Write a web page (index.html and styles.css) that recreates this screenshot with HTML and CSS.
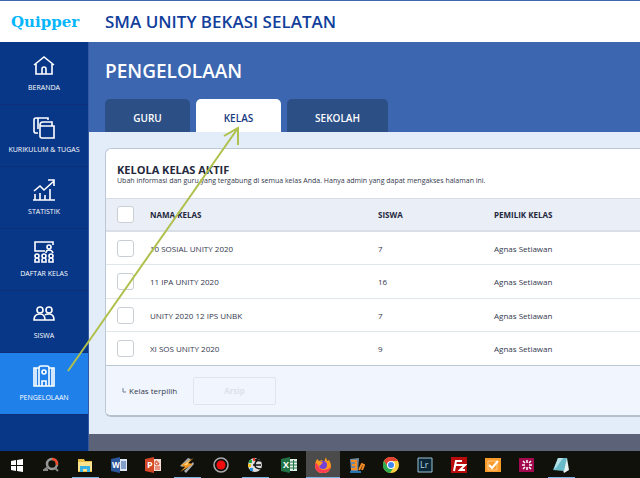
FILE: index.html
```html
<!DOCTYPE html>
<html lang="id">

<head>
    <meta charset="utf-8">
    <title>Quipper - Pengelolaan</title>
    <link rel="stylesheet" href="styles.css">
</head>

<body>
    <header class="topbar">
        <a href="#" class="logo">Quipper</a>
        <div class="school">SMA UNITY BEKASI SELATAN</div>
    </header>

    <div class="page">
        <nav class="sidebar">
            <a href="#" class="menu">
                <svg viewBox="0 0 22 22"><path d="M1 10 11 2l10 8M3 9v10h16V9M9 19v-5q0-2 2-2t2 2v5" /></svg>
                BERANDA
            </a>
            <a href="#" class="menu">
                <svg viewBox="0 0 22 22"><path d="M3 16q-2 0-2-2V3q0-2 2-2h12v2M5 1v11M1 16h4M7 8q0-3 3-3h9v4M7 8v11q0 2 2 2h12V9H9Q7 9 7 7" /></svg>
                KURIKULUM &amp; TUGAS
            </a>
            <a href="#" class="menu">
                <svg viewBox="0 0 22 22"><path d="M0 21h22M2 21v-6M7 21v-7M12 21v-5M17 21V10M1 12l6-5 4 4 10-9M15 1h6v6" /></svg>
                STATISTIK
            </a>
            <a href="#" class="menu">
                <svg viewBox="0 0 22 22"><path d="M12 10H2V1h18v3M13 12q0-3 3-3t4 3" /><circle cx="16" cy="6" r="2" /><path d="M4 13a2 2 0 1 1 0 4 2 2 0 1 1 0-4M11 13a2 2 0 1 1 0 4 2 2 0 1 1 0-4M18 13a2 2 0 1 1 0 4 2 2 0 1 1 0-4M2 21v-2q0-2 2-2t2 2v2zM9 21v-2q0-2 2-2t2 2v2zM16 21v-2q0-2 2-2t2 2v2z" /></svg>
                DAFTAR KELAS
            </a>
            <a href="#" class="menu">
                <svg viewBox="0 0 22 22"><circle cx="7" cy="7" r="3" /><circle cx="16" cy="7" r="3" /><path d="M1 17q0-6 6-6 5 0 5 6zM12 12q1-1 4-1 5 0 5 6h-9" /></svg>
                SISWA
            </a>
            <a href="#" class="menu active">
                <svg viewBox="0 0 22 22"><path d="M6 21V3q0-2 2-2h6q2 0 2 2v18M6 3H1v18h20V3h-5M3 3v18M19 3v18M9 21v-5h4v5" /><circle cx="11" cy="7" r="2" /></svg>
                PENGELOLAAN
            </a>
        </nav>

        <main class="content">
            <div class="banner">
                <h1>PENGELOLAAN</h1>
                <div class="tabs">
                    <button>GURU</button>
                    <button class="active">KELAS</button>
                    <button class="wide">SEKOLAH</button>
                </div>
            </div>

            <section class="panel">
                <div class="panel-head">
                    <h2>KELOLA KELAS AKTIF</h2>
                    <p>Ubah informasi dan guru yang tergabung di semua kelas Anda. Hanya admin yang dapat mengakses halaman ini.</p>
                </div>
                <table>
                    <thead>
                        <tr>
                            <th class="check"><input type="checkbox" aria-label="Pilih semua"></th>
                            <th class="name">NAMA KELAS</th>
                            <th class="count">SISWA</th>
                            <th>PEMILIK KELAS</th>
                        </tr>
                    </thead>
                    <tbody>
                        <tr>
                            <td class="check"><input type="checkbox" id="kelas1"></td>
                            <td><label for="kelas1">10 SOSIAL UNITY 2020</label></td>
                            <td>7</td>
                            <td>Agnas Setiawan</td>
                        </tr>
                        <tr>
                            <td class="check"><input type="checkbox" id="kelas2"></td>
                            <td><label for="kelas2">11 IPA UNITY 2020</label></td>
                            <td>16</td>
                            <td>Agnas Setiawan</td>
                        </tr>
                        <tr>
                            <td class="check"><input type="checkbox" id="kelas3"></td>
                            <td><label for="kelas3">UNITY 2020 12 IPS UNBK</label></td>
                            <td>7</td>
                            <td>Agnas Setiawan</td>
                        </tr>
                        <tr>
                            <td class="check"><input type="checkbox" id="kelas4"></td>
                            <td><label for="kelas4">XI SOS UNITY 2020</label></td>
                            <td>9</td>
                            <td>Agnas Setiawan</td>
                        </tr>
                    </tbody>
                </table>
                <div class="panel-foot">
                    <svg class="corner" viewBox="0 0 4 6"><path d="M1 0v4h3" /></svg>
                    <span>Kelas terpilih</span>
                    <button disabled>Arsip</button>
                </div>
            </section>

            <footer class="bottom"></footer>
        </main>
    </div>

    <!-- taskbar -->
    <div class="taskbar">
        <div class="app"><svg viewBox="0 0 16 16"><path fill="#fff" d="M2 4l5-1v5H2zM8 3l6-1v6H8zM2 9h5v5l-5-1zM8 9h6v6l-6-1z" /></svg></div>
        <div class="app"><svg viewBox="0 0 16 16"><g fill="none" stroke-width="2.5"><circle cx="9" cy="7" r="5" stroke="#999" /><path d="M9 2a5 5 0 0 1 5 6" stroke="#f04a28" /><path d="M5 10l-4 3h4M12 11l3 3" stroke="#888" stroke-width="2" /></g></svg></div>
        <div class="app open"><svg viewBox="0 0 16 16"><path fill="#e9bd4a" d="M1 2h6l1 2h7v11H1z" /><path fill="#fbe38e" d="M1 5h14v9H1z" /><path fill="#35b1e8" d="M3 9h10v6h-3v-3H6v3H3z" /></svg></div>
        <div class="app"><svg viewBox="0 0 16 16"><path fill="#dce6f5" d="M8 2h8v12H8z" /><path stroke="#2b579a" d="M10 5h5M10 7h5M10 9h5M10 11h5" /><path fill="#2b579a" d="M0 2l9-2v16l-9-2z" /><text x="1" y="11" font-size="8">W</text></svg></div>
        <div class="app"><svg viewBox="0 0 16 16"><path fill="#f7ddd6" d="M8 2h8v12H8z" /><path fill="none" stroke="#d24726" d="M10 10h5M10 12h5M12 4a2 2 0 1 0 2 2h-2z" /><path fill="#d24726" d="M0 2l9-2v16l-9-2z" /><text x="2" y="11" font-size="9">P</text></svg></div>
        <div class="app open"><svg viewBox="0 0 16 16"><path fill="#aaa" d="M1 9l8-8 3 1-8 8zM5 14l9-9 1 2-8 9z" /><path fill="#f59a22" d="M15 1L2 8l4 2-5 5 13-8-5-1z" /><path fill="#ffd783" d="M11 3L5 8l3 0z" /></svg></div>
        <div class="app"><svg viewBox="0 0 16 16"><circle cx="8" cy="8" r="7" fill="#111" stroke="#aaa" stroke-width="1.5" /><circle cx="8" cy="8" r="4.5" fill="#f00d0d" /></svg></div>
        <div class="app open"><svg viewBox="0 0 16 16"><circle cx="8" cy="8" r="7" fill="#ddd" /><path fill="none" stroke="#111" stroke-width="1.5" d="M14 4q-5-2-6 3t7 5M6 8h8M8 3l5-2" /><path fill="#26a643" d="M2 3h3v3H2z" /><path fill="#f6c51c" d="M1 7h3v3H1z" /><path fill="#258fe0" d="M3 11h3v3H3z" /><path fill="#ee3b24" d="M6 1h2v3H6z" /></svg></div>
        <div class="app"><svg viewBox="0 0 16 16"><path fill="#e3f0e8" d="M8 2h8v12H8z" /><path stroke="#217346" d="M9 5h7M9 8h7M9 11h7M12.500 3v10" /><path fill="#217346" d="M0 2l9-2v16l-9-2z" /><text x="2" y="11" font-size="9">X</text></svg></div>
        <div class="app open current"><svg viewBox="0 0 16 16"><path fill="#ff9a1c" d="M2 2l2 2 3-1 2 2 2-5 1 4 2-1q2 3 2 6a7.500 7 0 0 1-16 0q0-4 2-7z" /><path fill="#fb3b55" d="M0 8q0 8 8 8 6 0 8-6-3 3-7 3-5 0-6-5L1 6z" /><circle cx="8" cy="8" r="4" fill="#7640d8" /><path fill="#ff9a1c" d="M4 5q3-1 4 1-2 0-2 2l-2 1z" /></svg></div>
        <div class="app"><svg viewBox="0 0 16 16"><path fill="#70899e" d="M1 2l9-1-1 13H2z" /><path fill="none" stroke="#f68c24" stroke-width="2" d="M2 4h6M3 8h5M2 12h6M7 4v8M10 13l3-6 2 1-2 5" /><path stroke="#2873af" stroke-width="2" d="M1 15h11" /></svg></div>
        <div class="app"><svg viewBox="0 0 16 16"><circle cx="8" cy="8" r="8" fill="#ffd041" /><path fill="#e34133" d="M1 4a8 8 0 0 1 14 0H8L5 10z" /><path fill="#2da94f" d="M1 4a8 8 0 0 0 6 12l4-6H5z" /><circle cx="8" cy="8" r="4" fill="#fff" /><circle cx="8" cy="8" r="3" fill="#4285f4" /></svg></div>
        <div class="app"><svg viewBox="0 0 16 16"><path fill="#0b2737" stroke="#9cc3d4" d="M1 1h14v14H1z" /><text class="lr" x="3" y="11" font-size="9">Lr</text></svg></div>
        <div class="app"><svg viewBox="0 0 16 16"><path fill="#b90b0b" d="M0 0h16v16H0z" /><path fill="none" stroke="#fff" stroke-width="2" d="M3 14l2-10h6M4 8h5M9 8h5l-5 5h5" /></svg></div>
        <div class="app"><svg viewBox="0 0 16 16"><path fill="#f99b2b" d="M0 1h16v14H0z" /><path fill="none" stroke="#ffc987" d="M3 4h9v9H3z" /><path fill="none" stroke="#fff" stroke-width="2" d="M4 8l3 3 6-7" /></svg></div>
        <div class="app"><svg viewBox="0 0 16 16"><path fill="#a3094e" d="M0 1h15v14H0z" /><path stroke="#fff" stroke-width="1.500" d="M8 3v3M8 10v3M3 8h3M10 8h3M4 4l2 2M10 10l2 2M12 4l-2 2M6 10l-2 2" /></svg></div>
        <div class="app open"><svg viewBox="0 0 16 16"><path fill="#e8f2f2" d="M5 1h9l2 12-5 3z" /><path fill="#69b9c8" d="M5 1h9l-3 13-11-1z" /><path fill="#b7e1e8" d="M5 1h5L3 11l-2 1z" /></svg></div>
    </div>

    <!-- pointer from the menu to the tab -->
    <svg class="arrow" viewBox="0 0 180 250"><path d="M4 247 174 4M160 12l14-8v17" /></svg>
</body>

</html>
```

FILE: styles.css
```css
* {
    box-sizing: border-box;
}

body {
    margin: 0;
    min-height: 100vh;
    display: flex;
    flex-direction: column;
    position: relative;
    overflow-x: hidden;
    font-family: "Open Sans", "Noto Sans", sans-serif;
    font-size: 8px;
    color: #33384d;
}

button {
    font-family: inherit;
    padding: 0;
}

.topbar {
    display: flex;
    align-items: center;
    height: 42px;
    border-top: 1px solid #3c66b0;
    background-color: #fff;
}

.logo {
    width: 105px;
    padding-left: 11px;
    font-family: "DejaVu Serif", serif;
    font-size: 15px;
    font-weight: bold;
    color: #06b6fd;
    text-decoration: none;
}

.school {
    font-size: 17px;
    font-weight: 600;
    color: #123e9c;
}

.page {
    flex: 1;
    display: flex;
}

.sidebar {
    width: 89px;
    flex-shrink: 0;
    padding-top: 1px;
    background-color: #083788;
    border-right: 1px solid #3459a0;
}

.menu {
    display: flex;
    flex-direction: column;
    align-items: center;
    gap: 6px;
    height: 62px;
    padding-top: 12px;
    border-bottom: 1px solid #0d2f78;
    font-size: 7px;
    line-height: 10px;
    color: #fff;
    text-decoration: none;
    white-space: nowrap;
}

.menu svg {
    width: 22px;
    height: 22px;
    fill: none;
    stroke: #fff;
    stroke-width: 1.6;
}

.menu.active {
    background-color: #1e80e8;
}

.content {
    flex: 1;
    min-width: 0;
    display: flex;
    flex-direction: column;
    background-color: #e3edf9;
}

.banner {
    height: 90px;
    padding: 15px 0 0 16px;
    display: flex;
    flex-direction: column;
    justify-content: space-between;
    background-color: #3c66b0;
}

h1 {
    margin: 0;
    font-size: 19px;
    font-weight: 600;
    line-height: 28px;
    color: #fff;
}

.tabs {
    display: flex;
    gap: 6px;
}

.tabs button {
    width: 85px;
    height: 33px;
    padding-top: 4px;
    border: none;
    border-radius: 5px 5px 0 0;
    background-color: #2c4f86;
    color: #fff;
    font-size: 10px;
    font-weight: 600;
}

.tabs .wide {
    width: 101px;
}

.tabs .active {
    background-color: #fff;
    color: #153a80;
}

.panel {
    margin: 16px 0 17px 16px;
    border: 1px solid #bcc8d6;
    border-right: none;
    border-bottom: 2px solid #b5c0cc;
    border-radius: 6px 0 0 6px;
    background-color: #fff;
    overflow: hidden;
}

.panel-head {
    height: 49px;
    padding: 14px 0 0 11px;
    white-space: nowrap;
}

h2 {
    margin: 0;
    font-size: 11px;
    line-height: 14px;
    color: #24283c;
}

.panel-head p {
    margin: 0;
    font-size: 7px;
    line-height: 8px;
}

table {
    width: 100%;
    border-collapse: separate;
    border-spacing: 0;
    table-layout: fixed;
}

th,
td {
    height: 33px;
    padding: 0;
    text-align: left;
    border-bottom: 1px solid #e0e7ea;
}

tr:nth-child(even) td {
    height: 34px;
}

th {
    height: 34px;
    background-color: #e9eef7;
    border-top: 1px solid #d5dce4;
    border-bottom: 2px solid #d8dfe7;
    color: #24283c;
}

tr:last-child td {
    border-bottom: 1px solid #b9c8d4;
}

.check {
    width: 44px;
    padding-left: 11px;
}

.name {
    width: 228px;
}

.count {
    width: 116px;
}

input {
    appearance: none;
    display: block;
    width: 17px;
    height: 17px;
    margin: 0;
    border: 1px solid #c9cfd5;
    border-radius: 3px;
    background-color: #fff;
}

.panel-foot {
    display: flex;
    align-items: center;
    height: 49px;
    padding-left: 16px;
    background-color: #f1f6fe;
}

.corner {
    width: 4px;
    height: 6px;
    margin-right: 3px;
    fill: none;
    stroke: #6f7f9a;
}

.panel-foot span {
    width: 64px;
}

.panel-foot button {
    width: 83px;
    height: 28px;
    border: 1px solid #e0e5ec;
    border-radius: 2px;
    background-color: transparent;
    color: #dce2e9;
    font-size: 8px;
    font-weight: bold;
}

.bottom {
    flex: 1;
    min-height: 17px;
    background-color: #5c6277;
}

.taskbar {
    display: flex;
    height: 28px;
    background-color: #11110c;
    overflow: hidden;
}

.app {
    width: 34px;
    flex-shrink: 0;
    display: flex;
    justify-content: center;
    padding-top: 6px;
}

.app svg {
    width: 16px;
    height: 16px;
}

.app text {
    fill: #fff;
    font-weight: bold;
}

.app .lr {
    fill: #b4d5e2;
    font-weight: normal;
}

.open {
    background: linear-gradient(#76b3e4, #76b3e4) center bottom / 27px 2px no-repeat;
}

.current {
    background-color: #4b4b4b;
    background-size: 100% 2px;
}

.arrow {
    position: absolute;
    left: 64px;
    top: 124px;
    width: 180px;
    height: 250px;
    fill: none;
    stroke: #b0c04c;
    stroke-width: 2;
    pointer-events: none;
}
```
